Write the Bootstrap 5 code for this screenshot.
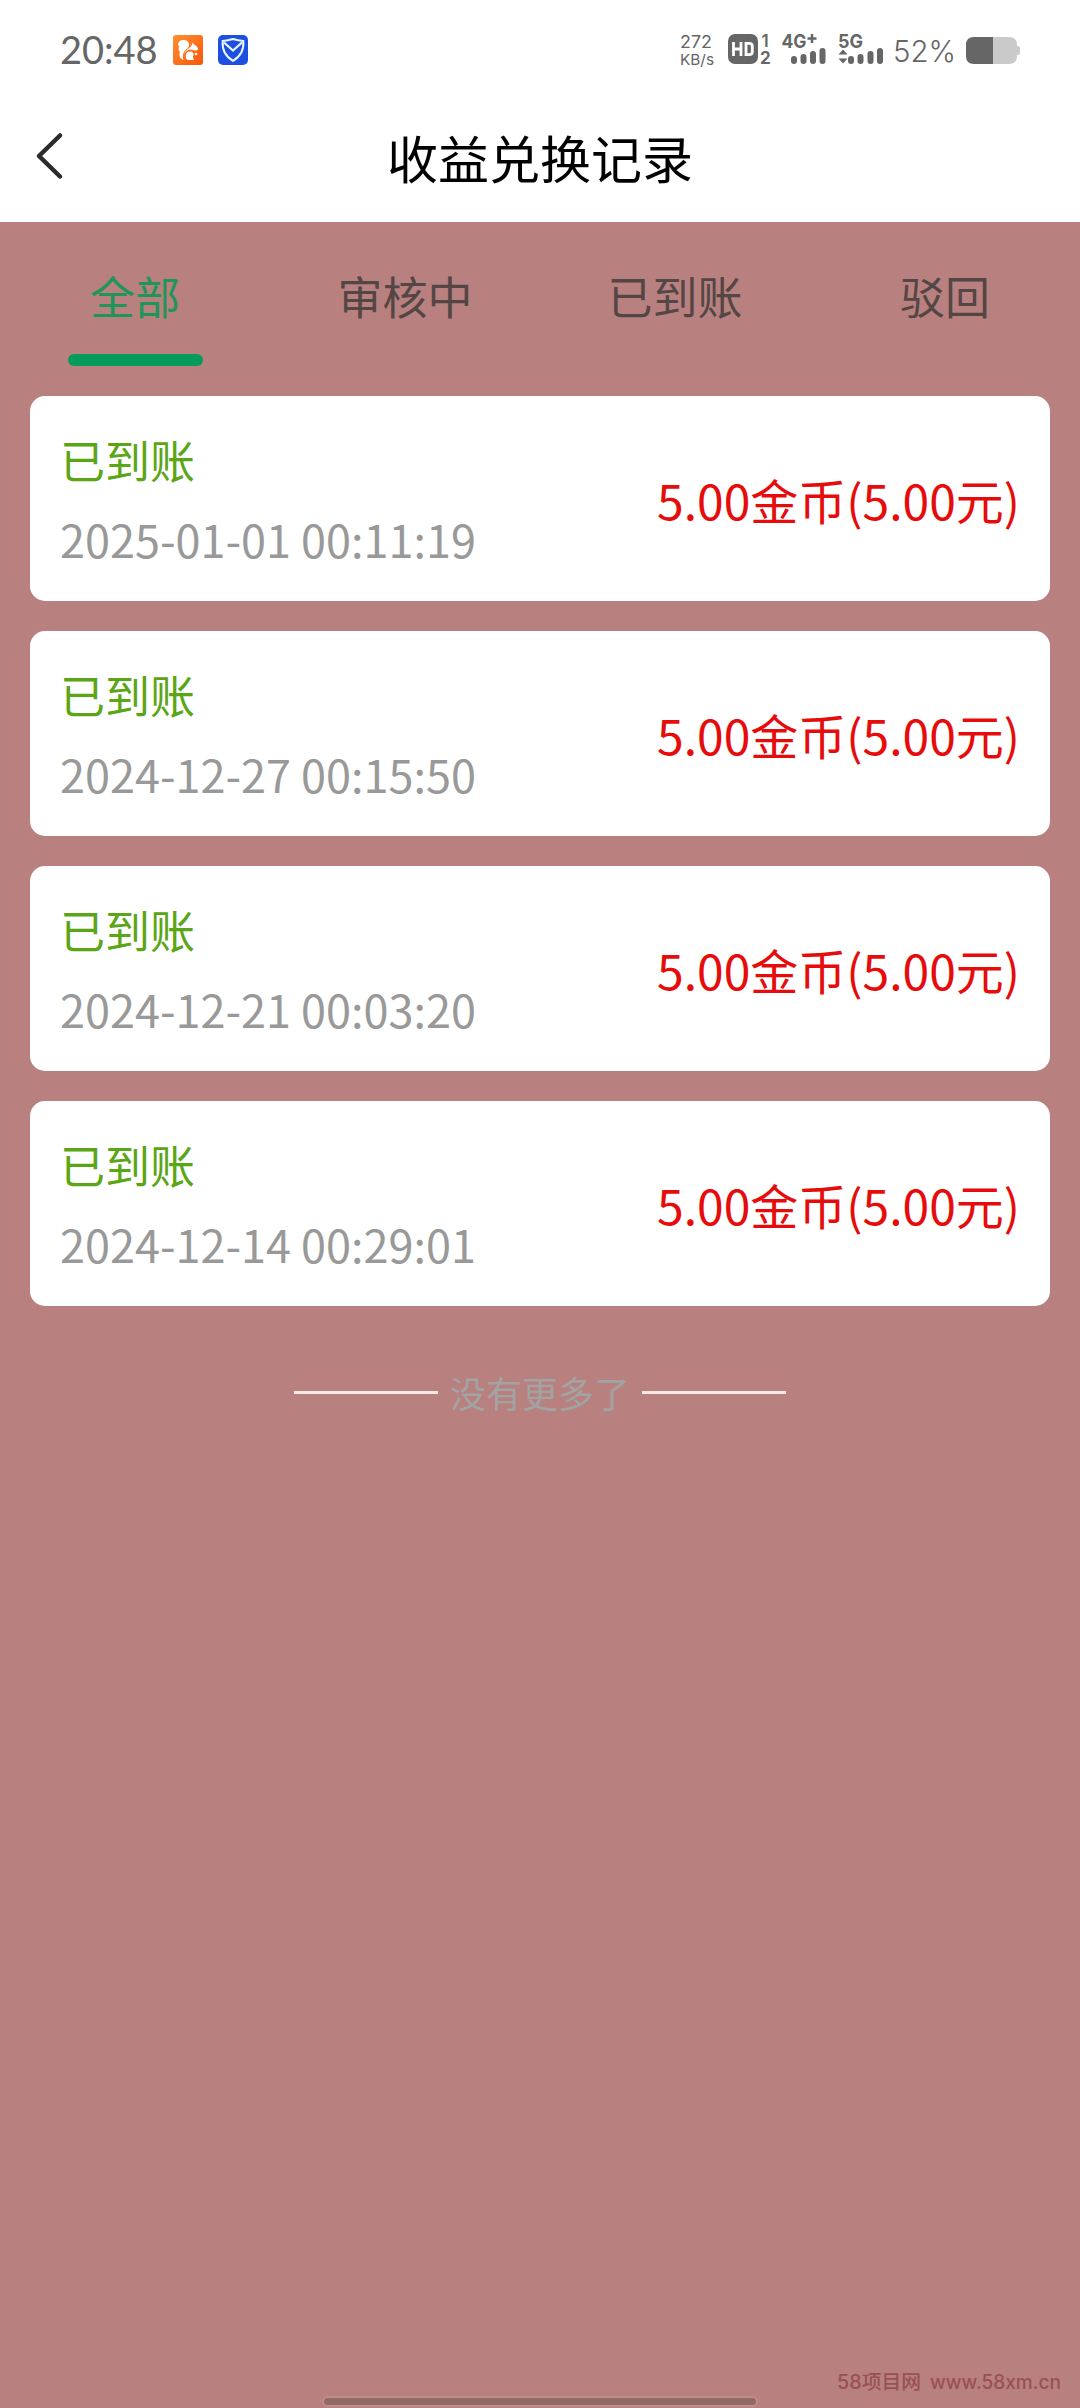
<!DOCTYPE html>
<html lang="zh-CN">
<head>
<meta charset="utf-8">
<meta name="viewport" content="width=device-width, initial-scale=1">
<title>收益兑换记录</title>
<link href="https://cdn.jsdelivr.net/npm/bootstrap@5.3.0/dist/css/bootstrap.min.css" rel="stylesheet">
<style>
body{font-family:"Noto Sans CJK SC",sans-serif;background:#b8807e;color:#000}
svg{display:block;flex:none;overflow:visible}
.screen{width:1080px;height:2408px;background:#b8807e;overflow:hidden}
.status-bar{height:98px;padding:0 60px}
.clock{font:400 38px/38px Lato,sans-serif;color:#666;width:98px}
.app-icons{gap:15px;margin-left:15px;padding-top:2px}
.signals{padding-top:2px}
.signals text{font-family:Inter,sans-serif;fill:#666}
.head{height:124px;padding:0 36px 9px}
.head-title{font-size:51px;line-height:60px;padding-top:2px}
.head-side{width:28px}
.tabs-row{height:174px}
.tabs-row .nav-link{color:#544645;font-size:45px;line-height:60px;padding:43.5px 0 0;border:0;border-radius:0}
.tabs-row .nav-link.active{color:#1f9559;background:none}
.tab-bar{width:135px;height:12px;border-radius:6px;background:#079b5b;margin-top:28.5px}
.records{gap:30px;padding:0 30px}
.record{height:205px;border:0;border-radius:15px;padding:0 30px}
.state{font-size:45px;line-height:60px;color:#5aa616;padding-top:1px;margin-bottom:19px}
.stamp{font-size:45px;line-height:60px;color:#999}
.amount{font-size:48px;line-height:60px;color:#e60c0c}
.no-more{gap:12px;margin-top:57.5px;font-size:36px;line-height:60px;color:#a3a3a3}
.no-more-text{margin-top:-2px}
.rule{width:144px;height:3px;background:#fbe8e7}
.home-bar{width:432px;height:7px;border-radius:4px;background:#916967;box-shadow:0 0 0 2px #bf8c8a;margin-bottom:3px}
.site-tag{margin:0 18px 15px 0}
.site-tag text{font-family:Inter,"Noto Sans CJK SC",sans-serif;font-size:19.500px;font-weight:500;fill:#995153}
</style>
</head>
<body>
<div class="screen position-relative d-flex flex-column">
<header class="bg-white">
<div class="status-bar d-flex align-items-center">
<span class="clock">20:48</span>
<div class="app-icons d-flex">
<svg width="30" height="30" viewBox="0 0 30 30"><defs><linearGradient id="og" x1="0" y1="0" x2="1" y2="1"><stop offset="0" stop-color="#ff9030"/><stop offset="1" stop-color="#f9550a"/></linearGradient></defs><rect width="30" height="30" rx="3" fill="url(#og)"/><path d="M11 5C6 4.500 4 8.500 6 11.500C5 14 6 16 7 17.500C5.500 20.500 7 24 10.500 25C9 20.500 10.500 17 13 14.500C16 12.500 17 10 15.500 7.500C14.500 5.800 13 5 11 5z" fill="#fff"/><path d="M19.500 7.500L21 9.500C23.500 10.500 25 12.500 25 14.500C23.500 16 22 15.500 20.500 15.200C16.500 13.500 13 15.500 11.300 19C11.500 16.500 14 14.300 16.500 12.800C18.500 11.500 19 10 19.500 7.500z" fill="#fff"/><path d="M17 16.500C20 16.500 21.500 19 20 21.500C19.500 23 21.200 23 20.800 25H14.500C11 21.500 13 16.500 17 16.500z" fill="#fff"/><circle cx="23" cy="19" r="1.300" fill="#fff"/></svg>
<svg width="30" height="30" viewBox="0 0 30 30"><rect width="30" height="30" rx="5" fill="#1d4fe0"/><path d="M15 4Q20 5.500 25.300 6Q26.500 19 15 25.800Q3.500 19 4.700 6Q10 5.500 15 4z" fill="none" stroke="#e8f6ff" stroke-width="2"/><path d="M6 7.500L15 15.500L24 7.500" fill="none" stroke="#e8f6ff" stroke-width="2.200"/></svg>
</div>
<div class="signals d-flex ms-auto">
<svg width="49" height="40" viewBox="679 30 49 40"><text x="680" y="48" font-size="17" textLength="32" lengthAdjust="spacingAndGlyphs">272</text><text x="680" y="65" font-size="15" textLength="34" lengthAdjust="spacingAndGlyphs">KB/s</text></svg>
<svg width="54" height="40" viewBox="728 30 54 40"><rect x="728" y="34" width="30" height="30" rx="7" fill="#666"/><path d="M733.500 42V56M741 42V56M733.500 49H741M746 43.300H749Q752.300 43.300 752.300 46V52Q752.300 54.700 749 54.700H746z" fill="none" stroke="#fff" stroke-width="2.800"/><text x="761.500" y="46.500" font-size="17" font-weight="600">1</text><text x="760" y="63.500" font-size="17" font-weight="700">2</text></svg>
<svg width="56" height="40" viewBox="782 30 56 40"><text x="781.500" y="48" font-size="19" font-weight="700" textLength="25" lengthAdjust="spacingAndGlyphs">4G</text><path d="M812 34V43M807.500 38.500H816.500" stroke="#666" stroke-width="2.500"/><path d="M794 59V61M803.500 57V61M813 54V61M822.500 51V61" stroke="#666" stroke-width="6" stroke-linecap="round"/></svg>
<svg width="56" height="40" viewBox="838 30 56 40"><text x="838" y="48" font-size="19" font-weight="700" textLength="25" lengthAdjust="spacingAndGlyphs">5G</text><path d="M843 49.500L847.500 54.500H838.500zM843 63.500L847.500 58.500H838.500z" fill="#666"/><path d="M851 59V61M860.500 57V61M870.500 54V61M880 51V61" stroke="#666" stroke-width="6" stroke-linecap="round"/></svg>
<svg width="72" height="40" viewBox="894 30 72 40"><text x="893" y="62" font-size="30" font-weight="300" textLength="63" lengthAdjust="spacingAndGlyphs">52%</text></svg>
<svg width="54" height="40" viewBox="966 30 54 40"><path d="M993 37H1009Q1017 37 1017 45V46H1018Q1020 46 1020 48V53Q1020 55 1018 55H1017V56Q1017 64 1009 64H993z" fill="#cacaca"/><path d="M993 37H974Q966 37 966 45V56Q966 64 974 64H993z" fill="#666"/></svg>
</div>
</div>
<div class="head d-flex align-items-center">
<svg class="head-side" height="48" viewBox="0 0 28 48"><path d="M24 3.500L3 24L24 44.500" fill="none" stroke="#2b2b2b" stroke-width="4.500" stroke-linecap="round" stroke-linejoin="round"/></svg>
<div class="head-title flex-grow-1 text-center">收益兑换记录</div>
<div class="head-side"></div>
</div>
</header>
<nav class="tabs-row nav nav-fill flex-nowrap">
<div class="col-3 d-flex flex-column align-items-center"><a class="nav-link active">全部</a><div class="tab-bar"></div></div>
<div class="col-3 text-center"><a class="nav-link">审核中</a></div>
<div class="col-3 text-center"><a class="nav-link">已到账</a></div>
<div class="col-3 text-center"><a class="nav-link">驳回</a></div>
</nav>
<main class="records d-flex flex-column">
<div class="record card flex-row align-items-center justify-content-between"><div><div class="state">已到账</div><div class="stamp">2025-01-01 00:11:19</div></div><div class="amount">5.00金币(5.00元)</div></div>
<div class="record card flex-row align-items-center justify-content-between"><div><div class="state">已到账</div><div class="stamp">2024-12-27 00:15:50</div></div><div class="amount">5.00金币(5.00元)</div></div>
<div class="record card flex-row align-items-center justify-content-between"><div><div class="state">已到账</div><div class="stamp">2024-12-21 00:03:20</div></div><div class="amount">5.00金币(5.00元)</div></div>
<div class="record card flex-row align-items-center justify-content-between"><div><div class="state">已到账</div><div class="stamp">2024-12-14 00:29:01</div></div><div class="amount">5.00金币(5.00元)</div></div>
</main>
<div class="no-more d-flex justify-content-center align-items-center"><span class="rule"></span><span class="no-more-text">没有更多了</span><span class="rule"></span></div>
<div class="home-bar position-absolute bottom-0 start-50 translate-middle-x"></div>
<svg class="site-tag position-absolute bottom-0 end-0" width="226" height="24" viewBox="836 2369 226 24"><text x="837" y="2388.500" textLength="84" lengthAdjust="spacingAndGlyphs">58项目网</text><text x="930" y="2388.500" textLength="131" lengthAdjust="spacingAndGlyphs">www.58xm.cn</text></svg>
</div>
</body>
</html>
